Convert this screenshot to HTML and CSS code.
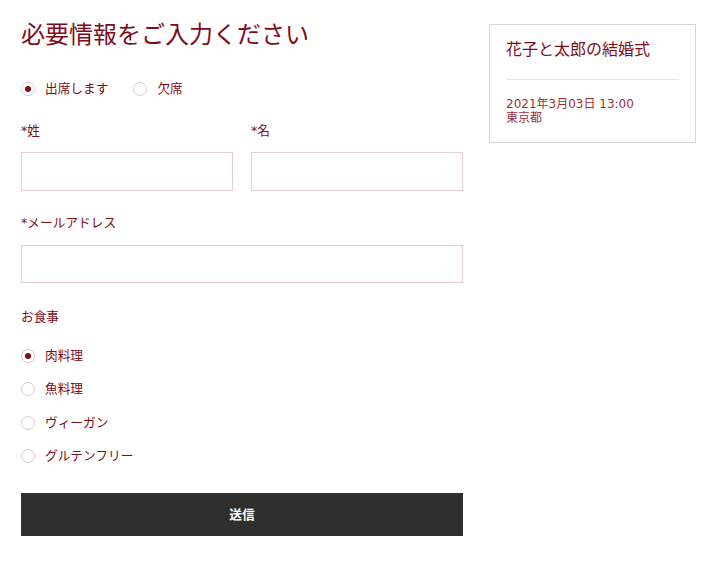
FILE: index.html
```html
<!DOCTYPE html>
<html lang="ja">
<head>
<meta charset="utf-8">
<title>必要情報をご入力ください</title>
<link rel="stylesheet" href="styles.css">
</head>
<body>
<div class="page">
  <main class="form-col">
    <h1 class="title">必要情報をご入力ください</h1>
    <div class="radio-row attend">
      <label class="radio"><span class="dot checked"></span>出席します</label>
      <label class="radio"><span class="dot"></span>欠席</label>
    </div>
    <div class="name-row">
      <div class="field">
        <div class="label">*姓</div>
        <div class="input"></div>
      </div>
      <div class="field">
        <div class="label">*名</div>
        <div class="input"></div>
      </div>
    </div>
    <div class="field email">
      <div class="label">*メールアドレス</div>
      <div class="input"></div>
    </div>
    <div class="label meal-label">お食事</div>
    <div class="meal-list">
      <label class="radio"><span class="dot checked"></span>肉料理</label>
      <label class="radio"><span class="dot"></span>魚料理</label>
      <label class="radio"><span class="dot"></span>ヴィーガン</label>
      <label class="radio"><span class="dot"></span>グルテンフリー</label>
    </div>
    <button class="submit">送信</button>
  </main>
  <aside class="card">
    <h2 class="card-title">花子と太郎の結婚式</h2>
    <hr class="divider">
    <div class="card-info">
      <div>2021年3月03日 13:00</div>
      <div>東京都</div>
    </div>
  </aside>
</div>
</body>
</html>
```
FILE: styles.css
```css
* { box-sizing: border-box; }
body {
  margin: 0;
  background: #fff;
  font-family: "DejaVu Sans", "Noto Sans CJK JP", sans-serif;
  color: #7f0c19;
}
.page {
  display: flex;
  align-items: flex-start;
  gap: 26px;
  padding: 20px 19px 0 21px;
}
.form-col {
  width: 442px;
  display: flex;
  flex-direction: column;
}
.title {
  margin: 0;
  font-size: 24px;
  line-height: 30px;
  font-weight: normal;
}
.radio-row {
  display: flex;
  gap: 25px;
}
.attend { margin-top: 29px; }
.radio {
  display: flex;
  align-items: center;
  gap: 10px;
  font-size: 12.7px;
  line-height: 20px;
  height: 20px;
}
.dot {
  width: 14px;
  height: 14px;
  border: 1px solid #e6c3c7;
  border-radius: 50%;
  display: flex;
  align-items: center;
  justify-content: center;
}
.dot.checked::after {
  content: "";
  width: 6px;
  height: 6px;
  border-radius: 50%;
  background: #7f0c19;
}
.name-row {
  display: flex;
  gap: 18px;
  margin-top: 22px;
}
.name-row .field { flex: 1; }
.label {
  font-size: 12.7px;
  line-height: 20px;
}
.input {
  margin-top: 11px;
  height: 39px;
  border: 1px solid #e8cdd0;
  background: #fff;
}
.email { margin-top: 22px; }
.email .input { margin-top: 12px; height: 38px; }
.meal-label { margin-top: 24px; }
.meal-list {
  display: flex;
  flex-direction: column;
  gap: 13.5px;
  margin-top: 18.5px;
}
.submit {
  margin-top: 27px;
  height: 43px;
  padding: 0 0 3px;
  border: 0;
  background: #2f2f2e;
  color: #fff;
  font-family: inherit;
  font-size: 12.7px;
  font-weight: bold;
}
.card {
  width: 207px;
  margin-top: 4px;
  border: 1px solid #d6d6d6;
  padding: 15px 16px 17px;
}
.card-title {
  margin: 0;
  font-size: 16px;
  line-height: 20px;
  font-weight: normal;
}
.divider {
  margin: 19px 0 0;
  border: 0;
  border-top: 1px solid #f1e1e3;
}
.card-info {
  margin-top: 17px;
  font-size: 12px;
  line-height: 14px;
  color: #9c2f3b;
}
```
